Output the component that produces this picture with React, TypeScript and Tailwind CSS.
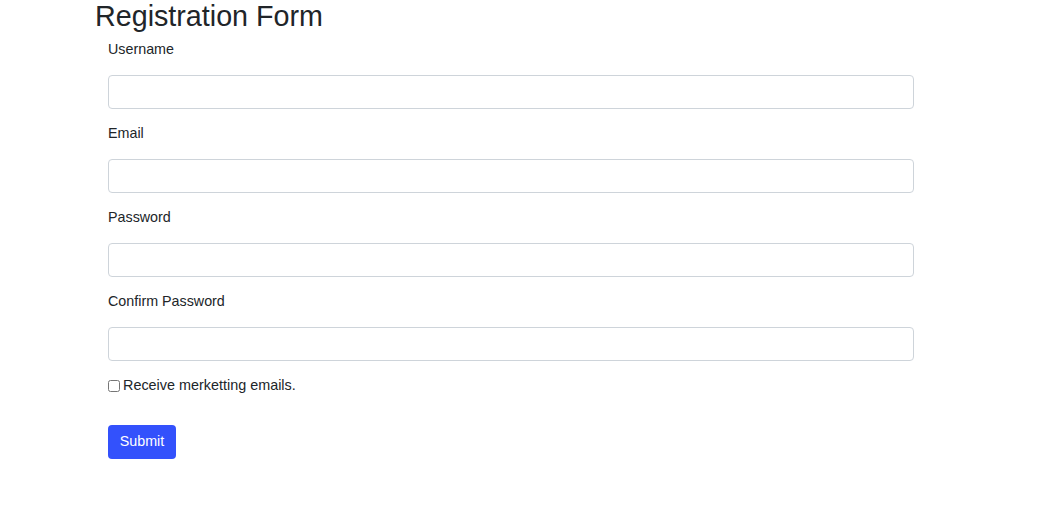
import React, { useState } from 'react';

const fields = [
    { id: 'username', label: 'Username', type: 'text' },
    { id: 'email', label: 'Email', type: 'email' },
    { id: 'password', label: 'Password', type: 'password' },
    { id: 'confirm', label: 'Confirm Password', type: 'password' },
];

const App: React.FC = () => {
    const [values, setValues] = useState<{ [key: string]: string }>({});
    const [marketing, setMarketing] = useState(false);

    return (
        <div className="min-h-screen bg-white pl-[95px] font-['Liberation_Sans',Arial,sans-serif] text-[#212529]">
            <h3 className="text-[28.7px] leading-[32px] font-normal">Registration Form</h3>
            <form
                className="w-[819px] pl-[13px] pt-[7px]"
                onSubmit={(e) => e.preventDefault()}
            >
                {fields.map((field, index) => (
                    <div key={field.id} className={index > 0 ? 'mt-[14px]' : ''}>
                        <label htmlFor={field.id} className="block text-[14.3px] leading-[21px] mb-[15px]">
                            {field.label}
                        </label>
                        <input
                            id={field.id}
                            type={field.type}
                            value={values[field.id] || ''}
                            onChange={(e) => setValues((prev) => ({ ...prev, [field.id]: e.target.value }))}
                            className="block w-full h-[34px] rounded-[4px] border border-[#ced4da] bg-white px-3 text-[15px] outline-none"
                        />
                    </div>
                ))}

                <label className="mt-[14px] flex items-center gap-[3px] text-[14.4px] leading-[21px]">
                    <input
                        type="checkbox"
                        checked={marketing}
                        onChange={(e) => setMarketing(e.target.checked)}
                        className="m-0 h-[12px] w-[12px]"
                    />
                    Receive merketting emails.
                </label>

                <button
                    type="submit"
                    className="mt-[29px] h-[34px] w-[68px] rounded-[4px] bg-[#3351fc] text-[14.3px] text-white"
                >
                    Submit
                </button>
            </form>
        </div>
    );
};

export default App;
